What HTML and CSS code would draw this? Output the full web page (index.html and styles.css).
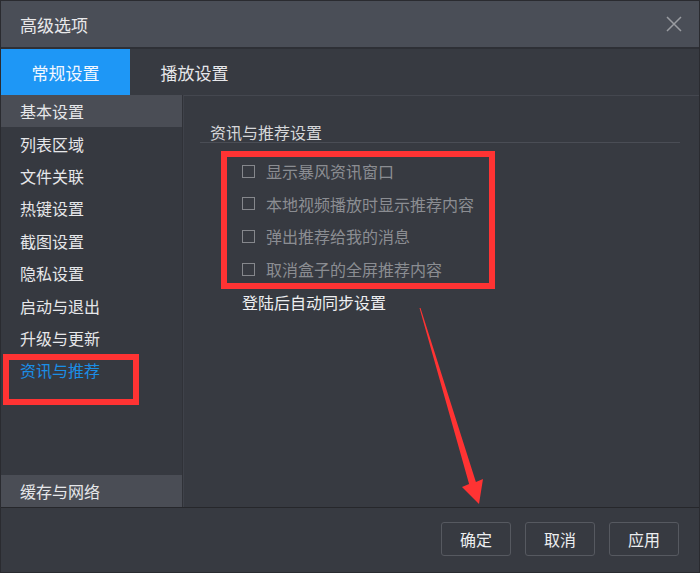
FILE: index.html
```html
<!DOCTYPE html>
<html lang="zh-CN">
<head>
    <meta charset="UTF-8">
    <meta name="viewport" content="width=device-width, initial-scale=1.0">
    <title>高级选项</title>
    <link rel="stylesheet" href="styles.css">
</head>
<body>
    <div class="dialog">
        <div class="titlebar">
            <span class="title">高级选项</span>
            <svg class="close" width="16" height="16" viewBox="0 0 16 16">
                <path d="M1 1 L15 15 M15 1 L1 15" stroke="#9a9ca1" stroke-width="1.5" fill="none"/>
            </svg>
        </div>

        <div class="tabs">
            <div class="tab active">常规设置</div>
            <div class="tab">播放设置</div>
        </div>

        <div class="body">
            <div class="sidebar">
                <div class="nav-item selected">基本设置</div>
                <div class="nav-item">列表区域</div>
                <div class="nav-item">文件关联</div>
                <div class="nav-item">热键设置</div>
                <div class="nav-item">截图设置</div>
                <div class="nav-item">隐私设置</div>
                <div class="nav-item">启动与退出</div>
                <div class="nav-item">升级与更新</div>
                <div class="nav-item current">资讯与推荐</div>
                <div class="nav-item bottom">缓存与网络</div>
            </div>

            <div class="content">
                <div class="section-title">资讯与推荐设置</div>
                <div class="options">
                    <div class="option"><span class="box"></span>显示暴风资讯窗口</div>
                    <div class="option"><span class="box"></span>本地视频播放时显示推荐内容</div>
                    <div class="option"><span class="box"></span>弹出推荐给我的消息</div>
                    <div class="option"><span class="box"></span>取消盒子的全屏推荐内容</div>
                    <div class="option plain">登陆后自动同步设置</div>
                </div>
            </div>
        </div>

        <div class="footer">
            <button class="btn">确定</button>
            <button class="btn">取消</button>
            <button class="btn">应用</button>
        </div>

        <!-- 标注 -->
        <div class="mark mark-options"></div>
        <div class="mark mark-nav"></div>
        <svg class="arrow" width="700" height="573" viewBox="0 0 700 573">
            <polygon fill="#f33" points="419.5,308 420.5,308 475.9,482 483,479 479,504 462,487 469.1,484"/>
        </svg>
    </div>
</body>
</html>
```

FILE: styles.css
```css
* {
    box-sizing: border-box;
}
html, body {
    margin: 0;
    padding: 0;
    background: #373a41;
}
body {
    font-family: "Noto Sans CJK SC", "Noto Sans", sans-serif;
    color: #e4e5e7;
}
.dialog {
    position: relative;
    width: 700px;
    height: 573px;
    border: 1px solid #2a2b30;
    background: #373a41;
    display: flex;
    flex-direction: column;
    overflow: hidden;
}
.titlebar {
    height: 48px;
    flex-shrink: 0;
    background: #4a4e57;
    border-bottom: 2px solid #2e3036;
    display: flex;
    align-items: center;
    justify-content: space-between;
    padding: 0 17px 0 19px;
}
.title {
    font-size: 17px;
    color: #e8e8ea;
}
.close {
    display: block;
}
.tabs {
    height: 46px;
    flex-shrink: 0;
    display: flex;
    background: #373a41;
}
.tab {
    width: 129px;
    display: flex;
    align-items: center;
    justify-content: center;
    font-size: 17px;
    color: #e6e7ea;
}
.tab.active {
    background: #1e97f6;
    color: #f2f7ff;
}
.body {
    flex: 1;
    display: flex;
    min-height: 0;
}
.sidebar {
    width: 182px;
    flex-shrink: 0;
    display: flex;
    flex-direction: column;
    border-right: 1px solid #303238;
    background: #363940;
}
.nav-item {
    height: 32.4px;
    flex-shrink: 0;
    display: flex;
    align-items: center;
    padding-left: 19px;
    font-size: 16px;
    color: #e6e7ea;
}
.nav-item.selected {
    background: #4a4d55;
}
.nav-item.current {
    color: #1b8ee6;
}
.nav-item.bottom {
    margin-top: auto;
    height: 32px;
    background: #4a4d55;
}
.content {
    flex: 1;
    border-top: 1px solid #44474f;
    border-left: 1px solid #3f424a;
    padding: 26px 19px 0 16px;
}
.section-title {
    font-size: 16px;
    line-height: 20px;
    padding-left: 10px;
    color: #d6d7da;
    border-bottom: 1px solid #4a4d55;
}
.options {
    margin-top: 12px;
    padding-left: 42px;
}
.option {
    height: 32.6px;
    display: flex;
    align-items: center;
    font-size: 16px;
    color: #8b8d92;
}
.option .box {
    width: 13px;
    height: 13px;
    border: 1px solid #85878c;
    margin-right: 11px;
}
.option.plain {
    color: #eeeff1;
}
.footer {
    height: 65px;
    flex-shrink: 0;
    border-top: 1px solid #26272b;
    display: flex;
    align-items: center;
    justify-content: flex-end;
    gap: 14px;
    padding-right: 20px;
    padding-bottom: 2px;
}
.btn {
    width: 70px;
    height: 34px;
    background: #373a41;
    border: 1px solid #565960;
    border-radius: 3px;
    color: #eceef0;
    font-family: inherit;
    font-size: 16px;
    padding: 0;
}
.mark {
    position: absolute;
    border: 6px solid #f33;
}
.mark-options {
    left: 220px;
    top: 150px;
    width: 274px;
    height: 138px;
}
.mark-nav {
    left: 2px;
    top: 353px;
    width: 136px;
    height: 51px;
}
.arrow {
    position: absolute;
    left: -1px;
    top: -1px;
}
```
